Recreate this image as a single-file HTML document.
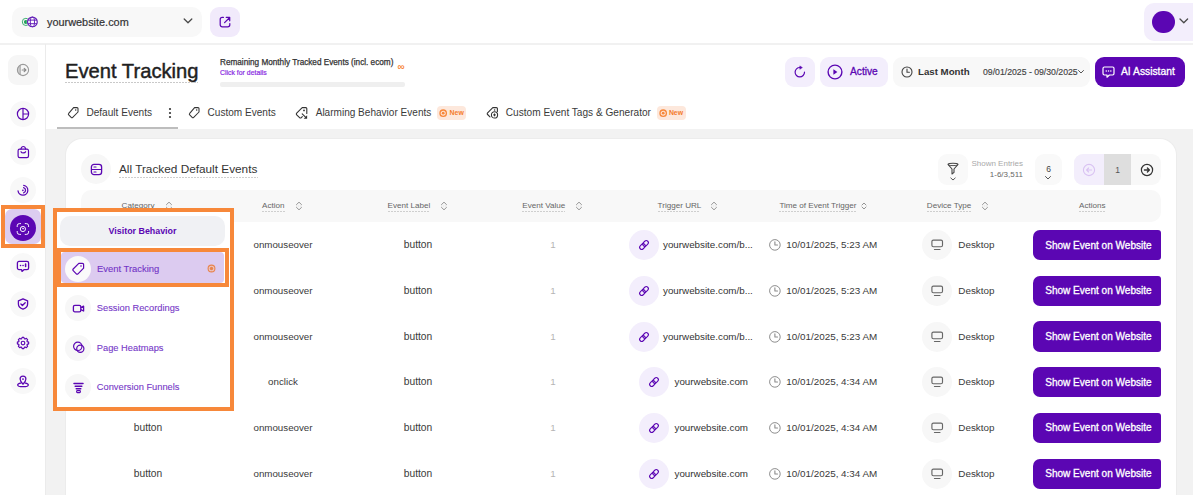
<!DOCTYPE html>
<html><head><meta charset="utf-8"><style>
html,body{margin:0;padding:0;width:1193px;height:495px;overflow:hidden;background:#fff}
body{position:relative;font-family:"Liberation Sans",sans-serif}
.t{position:absolute;white-space:nowrap}
</style></head><body>
<div style="position:absolute;left:12px;top:7px;width:190px;height:30px;background:#f8f8f8;border-radius:10px"></div>
<svg style="position:absolute;left:18px;top:12px" width="24" height="20" viewBox="0 0 24 20" fill="none"><circle cx="7.9" cy="9.9" r="3.6" stroke="#2aa862" stroke-width=".9"/><circle cx="7.9" cy="9.9" r="2" fill="#1ea257"/><circle cx="14.4" cy="9.9" r="5.7" fill="#f8f8f8"/><circle cx="14.4" cy="9.9" r="4.85" fill="#fff" stroke="#6420b8" stroke-width="1.2"/><ellipse cx="14.4" cy="9.9" rx="2.1" ry="4.85" stroke="#6420b8" stroke-width="1"/><path d="M9.8 8.1h9.2M9.8 11.7h9.2" stroke="#6420b8" stroke-width="1"/></svg>
<div class="t" style="left:47px;top:12.00px;height:20px;line-height:20px;font-size:10.9px;text-align:left;color:#333;-webkit-text-stroke:0.2px #333">yourwebsite.com</div>
<svg style="position:absolute;left:183px;top:17px" width="10" height="8" viewBox="0 0 10 8" fill="none"><path d="M1.2 2l3.8 3.8L8.8 2" stroke="#4a4a4a" stroke-width="1.3" stroke-linecap="round" stroke-linejoin="round"/></svg>
<div style="position:absolute;left:210px;top:7px;width:30px;height:30px;background:#f1eafb;border-radius:9px"></div>
<svg style="position:absolute;left:214px;top:12px" width="22" height="20" viewBox="0 0 22 20" fill="none"><path d="M9.4 5.4H8.3a2.1 2.1 0 0 0-2.1 2.1v5.2a2.1 2.1 0 0 0 2.1 2.1h5.4a2.1 2.1 0 0 0 2.1-2.1v-1.1" stroke="#5b06b3" stroke-width="1.25" stroke-linecap="round"/><path d="M10.6 10.6l4.6-4.6M12.2 5.3h3.5v3.5" stroke="#5b06b3" stroke-width="1.25" stroke-linecap="round" stroke-linejoin="round"/></svg>
<div style="position:absolute;left:1144px;top:3px;width:60px;height:38px;background:#f3eefc;border-radius:10px"></div>
<div style="position:absolute;left:1152px;top:10.7px;width:22.6px;height:22.6px;background:#5b06b3;border-radius:50%"></div>
<svg style="position:absolute;left:1178px;top:17px" width="12" height="8" viewBox="0 0 12 8" fill="none"><path d="M2 2l3.8 3.8L9.6 2" stroke="#4a4a4a" stroke-width="1.3" stroke-linecap="round" stroke-linejoin="round"/></svg>
<div style="position:absolute;left:0px;top:43px;width:1193px;height:1.5px;background:#f1f1f1"></div>
<div style="position:absolute;left:45px;top:44px;width:1px;height:451px;background:#ebebeb"></div>
<div style="position:absolute;left:8px;top:54.5px;width:30px;height:30px;background:#f6f6f6;border-radius:9px"></div>
<svg style="position:absolute;left:16px;top:63px" width="14" height="14" viewBox="0 0 14 14" fill="none"><path d="M4.2 1.9A5.6 5.6 0 0 0 4.2 12.1z" fill="#d0d0d0"/><circle cx="7" cy="7" r="5.6" stroke="#9a9a9a" stroke-width="1.1"/><path d="M4.2 2v10" stroke="#9a9a9a" stroke-width=".9"/><path d="M6.2 7h3.6M8.2 5.3L9.9 7 8.2 8.7" stroke="#8a8a8a" stroke-width="1.2" stroke-linecap="round" stroke-linejoin="round"/></svg>
<div style="position:absolute;left:9.7px;top:101px;width:26px;height:26px;background:#f8f8f8;border-radius:50%"></div>
<svg style="position:absolute;left:15.7px;top:107px" width="14" height="14" viewBox="0 0 14 14" fill="none"><circle cx="7" cy="7" r="5.6" stroke="#5b06b3" stroke-width="1.2"/><path d="M7 1.4v11.2M7 7h5.6" stroke="#5b06b3" stroke-width="1.2"/></svg>
<div style="position:absolute;left:9.7px;top:139px;width:26px;height:26px;background:#f8f8f8;border-radius:50%"></div>
<svg style="position:absolute;left:15.7px;top:145px" width="14" height="14" viewBox="0 0 14 14" fill="none"><path d="M3.6 4.2H11a1.5 1.5 0 0 1 1.5 1.5V11a1.6 1.6 0 0 1-1.6 1.6H3.7A1.6 1.6 0 0 1 2.1 11V5.7a1.5 1.5 0 0 1 1.5-1.5z" stroke="#5b06b3" stroke-width="1.2"/><path d="M4.9 4.2C5.3 2.3 6.1 1.5 7.3 1.5s2 .8 2.4 2.7M5 6.7c.7 1.6 4 1.6 4.6 0" stroke="#5b06b3" stroke-width="1.2" stroke-linecap="round"/></svg>
<div style="position:absolute;left:9.7px;top:177px;width:26px;height:26px;background:#f8f8f8;border-radius:50%"></div>
<svg style="position:absolute;left:15.7px;top:183px" width="14" height="14" viewBox="0 0 14 14" fill="none"><path d="M7.7 2.45A4.9 4.9 0 1 1 2.05 7.9" stroke="#5b06b3" stroke-width="1.25" stroke-linecap="round"/><path d="M7.6 4.7A2.7 2.7 0 0 1 7.6 9.9" stroke="#5b06b3" stroke-width="1.25" stroke-linecap="round"/><circle cx="6.9" cy="7.3" r=".85" fill="#5b06b3"/></svg>
<div style="position:absolute;left:9.7px;top:253.3px;width:26px;height:26px;background:#f8f8f8;border-radius:50%"></div>
<svg style="position:absolute;left:15.7px;top:259.3px" width="14" height="14" viewBox="0 0 14 14" fill="none"><path d="M3 2.4h8a1.6 1.6 0 0 1 1.6 1.6v5a1.6 1.6 0 0 1-1.6 1.6H8.2L6 12.4 5.6 10.6H3A1.6 1.6 0 0 1 1.4 9V4A1.6 1.6 0 0 1 3 2.4z" stroke="#5b06b3" stroke-width="1.3" stroke-linejoin="round"/><path d="M4.5 6.4h.1M7 6.4h.1M9.6 5v2.6" stroke="#5b06b3" stroke-width="1.5" stroke-linecap="round"/></svg>
<div style="position:absolute;left:9.7px;top:291.4px;width:26px;height:26px;background:#f8f8f8;border-radius:50%"></div>
<svg style="position:absolute;left:15.7px;top:297.4px" width="14" height="14" viewBox="0 0 14 14" fill="none"><path d="M7 1.8l4.6 2v3.2c0 2.6-2 4.4-4.6 5.2C4.4 11.4 2.4 9.6 2.4 7V3.8z" stroke="#5b06b3" stroke-width="1.3" stroke-linejoin="round"/><path d="M4.9 7l1.5 1.5L9.2 5.7" stroke="#5b06b3" stroke-width="1.3" stroke-linecap="round" stroke-linejoin="round"/></svg>
<div style="position:absolute;left:9.7px;top:329.5px;width:26px;height:26px;background:#f8f8f8;border-radius:50%"></div>
<svg style="position:absolute;left:15.7px;top:335.5px" width="14" height="14" viewBox="0 0 14 14" fill="none"><path d="M5.60 2.83 L6.11 1.37 L7.89 1.37 L8.40 2.83 L8.96 3.06 L10.35 2.39 L11.61 3.65 L10.94 5.04 L11.17 5.60 L12.63 6.11 L12.63 7.89 L11.17 8.40 L10.94 8.96 L11.61 10.35 L10.35 11.61 L8.96 10.94 L8.40 11.17 L7.89 12.63 L6.11 12.63 L5.60 11.17 L5.04 10.94 L3.65 11.61 L2.39 10.35 L3.06 8.96 L2.83 8.40 L1.37 7.89 L1.37 6.11 L2.83 5.60 L3.06 5.04 L2.39 3.65 L3.65 2.39 L5.04 3.06z" stroke="#5b06b3" stroke-width="1.15" stroke-linejoin="round"/><circle cx="7" cy="7" r="1.8" stroke="#5b06b3" stroke-width="1.15"/></svg>
<div style="position:absolute;left:9.7px;top:367.6px;width:26px;height:26px;background:#f8f8f8;border-radius:50%"></div>
<svg style="position:absolute;left:15.7px;top:373.6px" width="14" height="14" viewBox="0 0 14 14" fill="none"><path d="M7 10.2S4.1 7.4 4.1 5.1a2.9 2.9 0 0 1 5.8 0C9.9 7.4 7 10.2 7 10.2z" stroke="#5b06b3" stroke-width="1.25" stroke-linejoin="round"/><circle cx="7" cy="5.1" r=".9" fill="#5b06b3"/><path d="M4.7 9.1C2.9 9.4 1.7 10.1 1.7 10.9c0 1 2.4 1.8 5.3 1.8s5.3-.8 5.3-1.8c0-.8-1.2-1.5-3-1.8" stroke="#5b06b3" stroke-width="1.25" stroke-linecap="round"/></svg>
<div style="position:absolute;left:5.2px;top:209.4px;width:35.5px;height:35px;background:#dccdf0;border-radius:7px"></div>
<div style="position:absolute;left:9.8px;top:215.3px;width:26px;height:26px;background:#5b06b3;border-radius:50%"></div>
<svg style="position:absolute;left:15.8px;top:221.9px" width="14" height="14" viewBox="0 0 14 14" fill="none"><path d="M1.2 4.6V3.8A2.2 2.2 0 0 1 3.4 1.6h1.2M9.2 1.6h1.2a2.2 2.2 0 0 1 2.2 2.2v.8M12.6 9.4v.8a2.2 2.2 0 0 1-2.2 2.2H9.2M4.6 12.4H3.4a2.2 2.2 0 0 1-2.2-2.2v-.8" stroke="#fff" stroke-width=".95" stroke-linecap="round"/><circle cx="6.9" cy="7" r="2.6" stroke="#fff" stroke-width=".95"/><path d="M6.2 5.9l.9 1.3.5-.9" stroke="#fff" stroke-width=".8" stroke-linecap="round"/></svg>
<div style="position:absolute;left:1.3px;top:205.2px;width:43.6px;height:43.3px;border:4px solid #f7883a;box-sizing:border-box"></div>
<div style="position:absolute;left:46px;top:44.5px;width:1147px;height:85.5px;background:#fff"></div>
<div class="t" style="left:65px;top:58.00px;height:26px;line-height:26px;font-size:20.2px;text-align:left;color:#1f1f1f;-webkit-text-stroke:0.45px #1f1f1f">Event Tracking</div>
<div style="position:absolute;left:65px;top:82px;width:133px;height:1px;background:repeating-linear-gradient(90deg,#c9c9c9 0 2px,transparent 2px 3px)"></div>
<div class="t" style="left:220px;top:56.50px;height:12px;line-height:12px;font-size:8.2px;text-align:left;color:#333;-webkit-text-stroke:0.25px #333">Remaining Monthly Tracked Events (incl. ecom)</div>
<div class="t" style="left:220px;top:67.50px;height:10px;line-height:10px;font-size:6.9px;text-align:left;color:#8a2be2;-webkit-text-stroke:0.2px #8a2be2">Click for details</div>
<div class="t" style="left:397.5px;top:60.50px;height:12px;line-height:12px;font-size:10px;text-align:left;color:#f7883a;font-weight:700">&#8734;</div>
<div style="position:absolute;left:220px;top:82px;width:184.5px;height:5px;background:#efefef;border-radius:2px"></div>
<div style="position:absolute;left:785px;top:56.5px;width:30px;height:30px;background:#f3eefc;border-radius:9px"></div>
<svg style="position:absolute;left:790px;top:60px" width="20" height="22" viewBox="0 0 20 22" fill="none"><path d="M14.5 12.2A4.7 4.7 0 1 1 9.9 7.5" stroke="#5b06b3" stroke-width="1.2" stroke-linecap="round"/><path d="M9.8 5.9l2.6 1.7-2.6 1.7z" fill="#5b06b3" stroke="#5b06b3" stroke-width=".5" stroke-linejoin="round"/></svg>
<div style="position:absolute;left:820px;top:56.5px;width:68px;height:30px;background:#f3eefc;border-radius:9px"></div>
<svg style="position:absolute;left:827px;top:63.8px" width="16" height="16" viewBox="0 0 16 16" fill="none"><circle cx="8" cy="8" r="6.9" stroke="#5b06b3" stroke-width="1.4"/><path d="M6.4 5.2l4 2.8-4 2.8z" fill="#5b06b3"/></svg>
<div class="t" style="left:850px;top:63.50px;height:16px;line-height:16px;font-size:10.2px;text-align:left;color:#5b06b3;-webkit-text-stroke:0.3px #5b06b3">Active</div>
<div style="position:absolute;left:893px;top:56.5px;width:197px;height:30px;background:#f8f8f8;border-radius:9px"></div>
<svg style="position:absolute;left:901px;top:65.5px" width="12" height="12" viewBox="0 0 12 12" fill="none"><circle cx="6" cy="6" r="5" stroke="#444" stroke-width="1.1"/><path d="M6 3v3.2h2.4" stroke="#444" stroke-width="1.1" stroke-linecap="round"/></svg>
<div class="t" style="left:918px;top:63.50px;height:16px;line-height:16px;font-size:9.7px;text-align:left;color:#333;font-weight:700">Last Month</div>
<div class="t" style="left:983px;top:63.50px;height:16px;line-height:16px;font-size:8.7px;text-align:left;color:#444;-webkit-text-stroke:0.15px #444">09/01/2025 - 09/30/2025</div>
<svg style="position:absolute;left:1077px;top:69px" width="8" height="6" viewBox="0 0 8 6" fill="none"><path d="M1.5 1.5l2.5 2.5 2.5-2.5" stroke="#555" stroke-width="1" stroke-linecap="round"/></svg>
<div style="position:absolute;left:1095px;top:56.5px;width:89.5px;height:30px;background:#5b06b3;border-radius:9px"></div>
<svg style="position:absolute;left:1102px;top:64.5px" width="13" height="13" viewBox="0 0 13 13" fill="none"><path d="M2.4 2h8.2A1.4 1.4 0 0 1 12 3.4v5.2A1.4 1.4 0 0 1 10.6 10H7.4L5 12.2V10H2.4A1.4 1.4 0 0 1 1 8.6V3.4A1.4 1.4 0 0 1 2.4 2z" stroke="#fff" stroke-width="1.2" stroke-linejoin="round"/><path d="M4.2 6h.1M6.5 6h.1M8.8 6h.1" stroke="#fff" stroke-width="1.4" stroke-linecap="round"/></svg>
<div class="t" style="left:1121px;top:63.50px;height:16px;line-height:16px;font-size:10.3px;text-align:left;color:#fff;-webkit-text-stroke:0.3px #fff">AI Assistant</div>
<svg style="position:absolute;left:67px;top:106.3px" width="13" height="13" viewBox="0 0 13 13" fill="none"><path d="M6.6 1.6h3.4a1 1 0 0 1 1 1v3.4L5.7 11.3a1.1 1.1 0 0 1-1.55 0L1.7 8.85a1.1 1.1 0 0 1 0-1.55z" stroke="#333" stroke-width="1.05" stroke-linejoin="round"/><circle cx="8.7" cy="3.9" r=".75" fill="#333"/></svg>
<div class="t" style="left:86.4px;top:105.20px;height:16px;line-height:16px;font-size:10.1px;text-align:left;color:#3a3a3a">Default Events</div>
<svg style="position:absolute;left:168px;top:107px" width="4" height="12" viewBox="0 0 4 12" fill="none"><circle cx="2" cy="2" r="1.1" fill="#333"/><circle cx="2" cy="6" r="1.1" fill="#333"/><circle cx="2" cy="10" r="1.1" fill="#333"/></svg>
<svg style="position:absolute;left:188px;top:106.3px" width="13" height="13" viewBox="0 0 13 13" fill="none"><path d="M6.6 1.6h3.4a1 1 0 0 1 1 1v3.4L5.7 11.3a1.1 1.1 0 0 1-1.55 0L1.7 8.85a1.1 1.1 0 0 1 0-1.55z" stroke="#333" stroke-width="1.05" stroke-linejoin="round"/><circle cx="8.7" cy="3.9" r=".75" fill="#333"/></svg>
<div class="t" style="left:207.6px;top:105.20px;height:16px;line-height:16px;font-size:10.05px;text-align:left;color:#3a3a3a">Custom Events</div>
<svg style="position:absolute;left:292px;top:104px" width="20" height="18" viewBox="0 0 20 18" fill="none"><path d="M14.8 9.4V4.6a1 1 0 0 0-1-1h-3.6L4.7 9.1a1.2 1.2 0 0 0 0 1.7l2.9 2.9a1.2 1.2 0 0 0 1.7 0l1-1" stroke="#333" stroke-width="1.1" stroke-linecap="round" stroke-linejoin="round"/><circle cx="12" cy="6.4" r=".9" fill="#333"/><path d="M10.2 9.8l3.3 3.3" stroke="#333" stroke-width="1.1" stroke-linecap="round"/><path d="M15.1 11.3v3.4h-3.4z" fill="#333"/></svg>
<div class="t" style="left:315.7px;top:105.20px;height:16px;line-height:16px;font-size:10.05px;text-align:left;color:#3a3a3a">Alarming Behavior Events</div>
<div style="position:absolute;left:437.2px;top:106.4px;width:29px;height:13.4px;background:#fde8dc;border-radius:4px"></div>
<svg style="position:absolute;left:439.2px;top:108.7px" width="9" height="9" viewBox="0 0 9 9" fill="none"><circle cx="4.2" cy="4.2" r="3.2" stroke="#f7883a" stroke-width="1.3"/><circle cx="4.2" cy="4.2" r="1.4" fill="#f7883a"/></svg>
<div class="t" style="left:449.59999999999997px;top:108.30px;height:10px;line-height:10px;font-size:6.9px;text-align:left;color:#f47c2c;font-weight:700">New</div>
<svg style="position:absolute;left:484px;top:104px" width="20" height="18" viewBox="0 0 20 18" fill="none"><path d="M13.4 7.4V4.6a1 1 0 0 0-1-1H8.8L3.6 8.8a1.2 1.2 0 0 0 0 1.7l2.4 2.4" stroke="#333" stroke-width="1.1" stroke-linecap="round" stroke-linejoin="round"/><circle cx="10.6" cy="6" r=".8" fill="#333"/><circle cx="10.5" cy="10.9" r="3.1" stroke="#333" stroke-width="1.1"/><path d="M10.5 9.5v2.8M9.1 10.9h2.8" stroke="#333" stroke-width="1"/></svg>
<div class="t" style="left:505.8px;top:105.20px;height:16px;line-height:16px;font-size:10.1px;text-align:left;color:#3a3a3a">Custom Event Tags &amp; Generator</div>
<div style="position:absolute;left:656.5px;top:106.4px;width:29px;height:13.4px;background:#fde8dc;border-radius:4px"></div>
<svg style="position:absolute;left:658.5px;top:108.7px" width="9" height="9" viewBox="0 0 9 9" fill="none"><circle cx="4.2" cy="4.2" r="3.2" stroke="#f7883a" stroke-width="1.3"/><circle cx="4.2" cy="4.2" r="1.4" fill="#f7883a"/></svg>
<div class="t" style="left:668.9px;top:108.30px;height:10px;line-height:10px;font-size:6.9px;text-align:left;color:#f47c2c;font-weight:700">New</div>
<div style="position:absolute;left:46px;top:128.6px;width:1147px;height:367px;background:#f2f2f2"></div>
<div style="position:absolute;left:57px;top:127px;width:121px;height:2.2px;background:#bdbdbd"></div>
<div style="position:absolute;left:66px;top:138.5px;width:1110px;height:400px;background:#fff;border-radius:16px;box-shadow:0 0 0 1px #ececec"></div>
<div style="position:absolute;left:81px;top:154.3px;width:30px;height:30px;background:#f7f7f7;border-radius:50%"></div>
<svg style="position:absolute;left:90px;top:163px" width="13" height="13" viewBox="0 0 13 13" fill="none"><rect x="1.4" y="1.4" width="10.2" height="10.2" rx="2.6" stroke="#5b06b3" stroke-width="1.3"/><path d="M1.6 6.5h9.8M4 4h2M4 9h2" stroke="#5b06b3" stroke-width="1.2" stroke-linecap="round"/></svg>
<div class="t" style="left:119px;top:160.30px;height:18px;line-height:18px;font-size:11.8px;text-align:left;color:#333">All Tracked Default Events</div>
<div style="position:absolute;left:119px;top:176.8px;width:139px;height:1px;background:repeating-linear-gradient(90deg,#cfcfcf 0 2px,transparent 2px 3px)"></div>
<div style="position:absolute;left:938px;top:154px;width:30px;height:31px;background:#f9f9f9;border-radius:9px"></div>
<svg style="position:absolute;left:946px;top:162px" width="14" height="20" viewBox="0 0 14 20" fill="none"><path d="M2 2.4c0-.8 2.2-1.2 5-1.2s5 .4 5 1.2L8 7v3.4L6 12V7z" stroke="#444" stroke-width="1.1" stroke-linejoin="round"/><path d="M2.4 3c1.2.8 8 .8 9.2 0" stroke="#444" stroke-width=".9"/><path d="M4.8 16l2.2 2 2.2-2" stroke="#555" stroke-width="1" stroke-linecap="round"/></svg>
<div class="t" style="left:940px;top:158.00px;height:12px;line-height:12px;font-size:8.0px;width:83px;text-align:right;color:#a9a9a9">Shown Entries</div>
<div class="t" style="left:940px;top:169.30px;height:12px;line-height:12px;font-size:8.0px;width:83px;text-align:right;color:#666">1-6/3,511</div>
<div style="position:absolute;left:1035px;top:154px;width:27px;height:31px;background:#f9f9f9;border-radius:9px"></div>
<div class="t" style="left:1035px;top:163.30px;height:12px;line-height:12px;font-size:8.5px;width:27px;text-align:center;color:#444">6</div>
<svg style="position:absolute;left:1044px;top:175px" width="8" height="6" viewBox="0 0 8 6" fill="none"><path d="M1.5 1.5l2.5 2.5 2.5-2.5" stroke="#555" stroke-width="1" stroke-linecap="round"/></svg>
<div style="position:absolute;left:1074px;top:154px;width:87px;height:30.6px;background:#f8f8f8;border-radius:9px;overflow:hidden"></div>
<div style="position:absolute;left:1074px;top:154px;width:30px;height:30.6px;background:#f3eefc;border-radius:9px 0 0 9px"></div>
<div style="position:absolute;left:1104px;top:154px;width:27px;height:30.6px;background:#dedede"></div>
<div class="t" style="left:1104px;top:163.50px;height:12px;line-height:12px;font-size:8.5px;width:27px;text-align:center;color:#555">1</div>
<svg style="position:absolute;left:1082px;top:163px" width="14" height="14" viewBox="0 0 14 14" fill="none"><circle cx="7" cy="7" r="5.6" stroke="#d9c2f2" stroke-width="1.1"/><path d="M9.6 7H4.6M6.6 5L4.6 7l2 2" stroke="#d9c2f2" stroke-width="1.1" stroke-linecap="round" stroke-linejoin="round"/></svg>
<svg style="position:absolute;left:1139.5px;top:163px" width="14" height="14" viewBox="0 0 14 14" fill="none"><circle cx="7" cy="7" r="5.6" stroke="#333" stroke-width="1.2"/><path d="M4.4 7h5M7.4 5l2 2-2 2" stroke="#333" stroke-width="1.3" stroke-linecap="round" stroke-linejoin="round"/></svg>
<div style="position:absolute;left:81px;top:190px;width:1080px;height:32px;background:#f8f8f8;border-radius:10px"></div>
<div class="t" style="left:121.6px;top:199.70px;height:12px;line-height:12px;font-size:8.1px;text-align:left;color:#666">Category</div>
<div style="position:absolute;left:121.6px;top:211px;width:33.4px;height:1px;background:repeating-linear-gradient(90deg,#cfcfcf 0 2px,transparent 2px 3px)"></div>
<svg style="position:absolute;left:165px;top:200.7px" width="8" height="10" viewBox="0 0 8 10" fill="none"><path d="M1.5 3.6L4 1.2l2.5 2.4M1.5 6.4L4 8.8l2.5-2.4" stroke="#8a8a8a" stroke-width=".9" stroke-linecap="round" stroke-linejoin="round"/><path d="M1.2 5h5.6" stroke="#d6d6d6" stroke-width=".8" stroke-dasharray="1 1"/></svg>
<div class="t" style="left:262px;top:199.70px;height:12px;line-height:12px;font-size:8.1px;text-align:left;color:#666">Action</div>
<div style="position:absolute;left:262px;top:211px;width:23px;height:1px;background:repeating-linear-gradient(90deg,#cfcfcf 0 2px,transparent 2px 3px)"></div>
<svg style="position:absolute;left:295px;top:200.7px" width="8" height="10" viewBox="0 0 8 10" fill="none"><path d="M1.5 3.6L4 1.2l2.5 2.4M1.5 6.4L4 8.8l2.5-2.4" stroke="#8a8a8a" stroke-width=".9" stroke-linecap="round" stroke-linejoin="round"/><path d="M1.2 5h5.6" stroke="#d6d6d6" stroke-width=".8" stroke-dasharray="1 1"/></svg>
<div class="t" style="left:387.6px;top:199.70px;height:12px;line-height:12px;font-size:8.1px;text-align:left;color:#666">Event Label</div>
<div style="position:absolute;left:387.6px;top:211px;width:42.4px;height:1px;background:repeating-linear-gradient(90deg,#cfcfcf 0 2px,transparent 2px 3px)"></div>
<svg style="position:absolute;left:439.6px;top:200.7px" width="8" height="10" viewBox="0 0 8 10" fill="none"><path d="M1.5 3.6L4 1.2l2.5 2.4M1.5 6.4L4 8.8l2.5-2.4" stroke="#8a8a8a" stroke-width=".9" stroke-linecap="round" stroke-linejoin="round"/><path d="M1.2 5h5.6" stroke="#d6d6d6" stroke-width=".8" stroke-dasharray="1 1"/></svg>
<div class="t" style="left:522.3px;top:199.70px;height:12px;line-height:12px;font-size:8.1px;text-align:left;color:#666">Event Value</div>
<div style="position:absolute;left:522.3px;top:211px;width:43px;height:1px;background:repeating-linear-gradient(90deg,#cfcfcf 0 2px,transparent 2px 3px)"></div>
<svg style="position:absolute;left:574.9px;top:200.7px" width="8" height="10" viewBox="0 0 8 10" fill="none"><path d="M1.5 3.6L4 1.2l2.5 2.4M1.5 6.4L4 8.8l2.5-2.4" stroke="#8a8a8a" stroke-width=".9" stroke-linecap="round" stroke-linejoin="round"/><path d="M1.2 5h5.6" stroke="#d6d6d6" stroke-width=".8" stroke-dasharray="1 1"/></svg>
<div class="t" style="left:657.6px;top:199.70px;height:12px;line-height:12px;font-size:8.1px;text-align:left;color:#666">Trigger URL</div>
<div style="position:absolute;left:657.6px;top:211px;width:42.4px;height:1px;background:repeating-linear-gradient(90deg,#cfcfcf 0 2px,transparent 2px 3px)"></div>
<svg style="position:absolute;left:710px;top:200.7px" width="8" height="10" viewBox="0 0 8 10" fill="none"><path d="M1.5 3.6L4 1.2l2.5 2.4M1.5 6.4L4 8.8l2.5-2.4" stroke="#8a8a8a" stroke-width=".9" stroke-linecap="round" stroke-linejoin="round"/><path d="M1.2 5h5.6" stroke="#d6d6d6" stroke-width=".8" stroke-dasharray="1 1"/></svg>
<div class="t" style="left:779.4px;top:199.70px;height:12px;line-height:12px;font-size:8.1px;text-align:left;color:#666">Time of Event Trigger</div>
<div style="position:absolute;left:779.4px;top:211px;width:77.8px;height:1px;background:repeating-linear-gradient(90deg,#cfcfcf 0 2px,transparent 2px 3px)"></div>
<svg style="position:absolute;left:860.5px;top:201.5px" width="6" height="8" viewBox="0 0 6 8" fill="none"><path d="M1 3L3 1l2 2M1 5l2 2 2-2" stroke="#888" stroke-width=".9" stroke-linecap="round" stroke-linejoin="round"/></svg>
<div class="t" style="left:926.8px;top:199.70px;height:12px;line-height:12px;font-size:8.1px;text-align:left;color:#666">Device Type</div>
<div style="position:absolute;left:926.8px;top:211px;width:44.6px;height:1px;background:repeating-linear-gradient(90deg,#cfcfcf 0 2px,transparent 2px 3px)"></div>
<svg style="position:absolute;left:980.5px;top:200.7px" width="8" height="10" viewBox="0 0 8 10" fill="none"><path d="M1.5 3.6L4 1.2l2.5 2.4M1.5 6.4L4 8.8l2.5-2.4" stroke="#8a8a8a" stroke-width=".9" stroke-linecap="round" stroke-linejoin="round"/><path d="M1.2 5h5.6" stroke="#d6d6d6" stroke-width=".8" stroke-dasharray="1 1"/></svg>
<div class="t" style="left:1079px;top:199.70px;height:12px;line-height:12px;font-size:8.1px;text-align:left;color:#666">Actions</div>
<div style="position:absolute;left:1079px;top:211px;width:27px;height:1px;background:repeating-linear-gradient(90deg,#cfcfcf 0 2px,transparent 2px 3px)"></div>
<div class="t" style="left:100px;top:237.10px;height:16px;line-height:16px;font-size:10.25px;width:96px;text-align:center;color:#3a3a3a">button</div>
<div class="t" style="left:233px;top:237.10px;height:16px;line-height:16px;font-size:9.75px;width:100px;text-align:center;color:#3a3a3a">onmouseover</div>
<div class="t" style="left:368px;top:237.10px;height:16px;line-height:16px;font-size:10.25px;width:100px;text-align:center;color:#3a3a3a">button</div>
<div class="t" style="left:503px;top:237.10px;height:16px;line-height:16px;font-size:9.8px;width:100px;text-align:center;color:#b5b5b5">1</div>
<div style="position:absolute;left:629px;top:230.1px;width:30px;height:30px;background:#f3eefc;border-radius:50%"></div>
<svg style="position:absolute;left:636.2px;top:237.1px" width="16" height="16" viewBox="0 0 16 16" fill="none"><g transform="rotate(-45 8 8)"><rect x="2.7" y="5.9" width="6.2" height="4.2" rx="2.1" stroke="#5b06b3" stroke-width="1.1"/><rect x="7.1" y="5.9" width="6.2" height="4.2" rx="2.1" stroke="#5b06b3" stroke-width="1.1"/></g></svg>
<div class="t" style="left:663px;top:237.10px;height:16px;line-height:16px;font-size:9.8px;text-align:left;color:#333">yourwebsite.com/b...</div>
<svg style="position:absolute;left:769px;top:239.1px" width="12" height="12" viewBox="0 0 12 12" fill="none"><circle cx="5.9" cy="5.9" r="5.3" stroke="#8c8c8c" stroke-width="1"/><path d="M5.9 2.9v3.1h2.6" stroke="#8c8c8c" stroke-width="1.1" stroke-linecap="round" stroke-linejoin="round"/></svg>
<div class="t" style="left:786.3px;top:237.10px;height:16px;line-height:16px;font-size:9.87px;text-align:left;color:#3a3a3a">10/01/2025, 5:23 AM</div>
<div style="position:absolute;left:922.3px;top:230.1px;width:30px;height:30px;background:#f7f7f7;border-radius:50%"></div>
<svg style="position:absolute;left:930.3px;top:238.1px" width="14" height="14" viewBox="0 0 14 14" fill="none"><rect x="1.9" y="2.1" width="10.6" height="6.6" rx="1.5" stroke="#666" stroke-width="1.15"/><path d="M4.4 11.5h5.6" stroke="#666" stroke-width="1.1" stroke-linecap="round"/></svg>
<div class="t" style="left:958.3px;top:237.10px;height:16px;line-height:16px;font-size:9.87px;text-align:left;color:#3a3a3a">Desktop</div>
<div style="position:absolute;left:1033.4px;top:229.9px;width:128px;height:30.4px;background:#5b06b3;border-radius:7px 3px 3px 7px"></div>
<div class="t" style="left:1045.2px;top:237.60px;height:16px;line-height:16px;font-size:10.05px;text-align:left;color:#fff;-webkit-text-stroke:0.3px #fff">Show Event on Website</div>
<div class="t" style="left:100px;top:282.82px;height:16px;line-height:16px;font-size:10.25px;width:96px;text-align:center;color:#3a3a3a">button</div>
<div class="t" style="left:233px;top:282.82px;height:16px;line-height:16px;font-size:9.75px;width:100px;text-align:center;color:#3a3a3a">onmouseover</div>
<div class="t" style="left:368px;top:282.82px;height:16px;line-height:16px;font-size:10.25px;width:100px;text-align:center;color:#3a3a3a">button</div>
<div class="t" style="left:503px;top:282.82px;height:16px;line-height:16px;font-size:9.8px;width:100px;text-align:center;color:#b5b5b5">1</div>
<div style="position:absolute;left:629px;top:275.82px;width:30px;height:30px;background:#f3eefc;border-radius:50%"></div>
<svg style="position:absolute;left:636.2px;top:282.82px" width="16" height="16" viewBox="0 0 16 16" fill="none"><g transform="rotate(-45 8 8)"><rect x="2.7" y="5.9" width="6.2" height="4.2" rx="2.1" stroke="#5b06b3" stroke-width="1.1"/><rect x="7.1" y="5.9" width="6.2" height="4.2" rx="2.1" stroke="#5b06b3" stroke-width="1.1"/></g></svg>
<div class="t" style="left:663px;top:282.82px;height:16px;line-height:16px;font-size:9.8px;text-align:left;color:#333">yourwebsite.com/b...</div>
<svg style="position:absolute;left:769px;top:284.82px" width="12" height="12" viewBox="0 0 12 12" fill="none"><circle cx="5.9" cy="5.9" r="5.3" stroke="#8c8c8c" stroke-width="1"/><path d="M5.9 2.9v3.1h2.6" stroke="#8c8c8c" stroke-width="1.1" stroke-linecap="round" stroke-linejoin="round"/></svg>
<div class="t" style="left:786.3px;top:282.82px;height:16px;line-height:16px;font-size:9.87px;text-align:left;color:#3a3a3a">10/01/2025, 5:23 AM</div>
<div style="position:absolute;left:922.3px;top:275.82px;width:30px;height:30px;background:#f7f7f7;border-radius:50%"></div>
<svg style="position:absolute;left:930.3px;top:283.82px" width="14" height="14" viewBox="0 0 14 14" fill="none"><rect x="1.9" y="2.1" width="10.6" height="6.6" rx="1.5" stroke="#666" stroke-width="1.15"/><path d="M4.4 11.5h5.6" stroke="#666" stroke-width="1.1" stroke-linecap="round"/></svg>
<div class="t" style="left:958.3px;top:282.82px;height:16px;line-height:16px;font-size:9.87px;text-align:left;color:#3a3a3a">Desktop</div>
<div style="position:absolute;left:1033.4px;top:275.62px;width:128px;height:30.4px;background:#5b06b3;border-radius:7px 3px 3px 7px"></div>
<div class="t" style="left:1045.2px;top:283.32px;height:16px;line-height:16px;font-size:10.05px;text-align:left;color:#fff;-webkit-text-stroke:0.3px #fff">Show Event on Website</div>
<div class="t" style="left:100px;top:328.54px;height:16px;line-height:16px;font-size:10.25px;width:96px;text-align:center;color:#3a3a3a">button</div>
<div class="t" style="left:233px;top:328.54px;height:16px;line-height:16px;font-size:9.75px;width:100px;text-align:center;color:#3a3a3a">onmouseover</div>
<div class="t" style="left:368px;top:328.54px;height:16px;line-height:16px;font-size:10.25px;width:100px;text-align:center;color:#3a3a3a">button</div>
<div class="t" style="left:503px;top:328.54px;height:16px;line-height:16px;font-size:9.8px;width:100px;text-align:center;color:#b5b5b5">1</div>
<div style="position:absolute;left:629px;top:321.53999999999996px;width:30px;height:30px;background:#f3eefc;border-radius:50%"></div>
<svg style="position:absolute;left:636.2px;top:328.53999999999996px" width="16" height="16" viewBox="0 0 16 16" fill="none"><g transform="rotate(-45 8 8)"><rect x="2.7" y="5.9" width="6.2" height="4.2" rx="2.1" stroke="#5b06b3" stroke-width="1.1"/><rect x="7.1" y="5.9" width="6.2" height="4.2" rx="2.1" stroke="#5b06b3" stroke-width="1.1"/></g></svg>
<div class="t" style="left:663px;top:328.54px;height:16px;line-height:16px;font-size:9.8px;text-align:left;color:#333">yourwebsite.com/b...</div>
<svg style="position:absolute;left:769px;top:330.53999999999996px" width="12" height="12" viewBox="0 0 12 12" fill="none"><circle cx="5.9" cy="5.9" r="5.3" stroke="#8c8c8c" stroke-width="1"/><path d="M5.9 2.9v3.1h2.6" stroke="#8c8c8c" stroke-width="1.1" stroke-linecap="round" stroke-linejoin="round"/></svg>
<div class="t" style="left:786.3px;top:328.54px;height:16px;line-height:16px;font-size:9.87px;text-align:left;color:#3a3a3a">10/01/2025, 5:23 AM</div>
<div style="position:absolute;left:922.3px;top:321.53999999999996px;width:30px;height:30px;background:#f7f7f7;border-radius:50%"></div>
<svg style="position:absolute;left:930.3px;top:329.53999999999996px" width="14" height="14" viewBox="0 0 14 14" fill="none"><rect x="1.9" y="2.1" width="10.6" height="6.6" rx="1.5" stroke="#666" stroke-width="1.15"/><path d="M4.4 11.5h5.6" stroke="#666" stroke-width="1.1" stroke-linecap="round"/></svg>
<div class="t" style="left:958.3px;top:328.54px;height:16px;line-height:16px;font-size:9.87px;text-align:left;color:#3a3a3a">Desktop</div>
<div style="position:absolute;left:1033.4px;top:321.34px;width:128px;height:30.4px;background:#5b06b3;border-radius:7px 3px 3px 7px"></div>
<div class="t" style="left:1045.2px;top:329.04px;height:16px;line-height:16px;font-size:10.05px;text-align:left;color:#fff;-webkit-text-stroke:0.3px #fff">Show Event on Website</div>
<div class="t" style="left:100px;top:374.26px;height:16px;line-height:16px;font-size:10.25px;width:96px;text-align:center;color:#3a3a3a">button</div>
<div class="t" style="left:233px;top:374.26px;height:16px;line-height:16px;font-size:9.75px;width:100px;text-align:center;color:#3a3a3a">onclick</div>
<div class="t" style="left:368px;top:374.26px;height:16px;line-height:16px;font-size:10.25px;width:100px;text-align:center;color:#3a3a3a">button</div>
<div class="t" style="left:503px;top:374.26px;height:16px;line-height:16px;font-size:9.8px;width:100px;text-align:center;color:#b5b5b5">1</div>
<div style="position:absolute;left:639px;top:367.26px;width:30px;height:30px;background:#f3eefc;border-radius:50%"></div>
<svg style="position:absolute;left:646.2px;top:374.26px" width="16" height="16" viewBox="0 0 16 16" fill="none"><g transform="rotate(-45 8 8)"><rect x="2.7" y="5.9" width="6.2" height="4.2" rx="2.1" stroke="#5b06b3" stroke-width="1.1"/><rect x="7.1" y="5.9" width="6.2" height="4.2" rx="2.1" stroke="#5b06b3" stroke-width="1.1"/></g></svg>
<div class="t" style="left:674.5px;top:374.26px;height:16px;line-height:16px;font-size:9.8px;text-align:left;color:#333">yourwebsite.com</div>
<svg style="position:absolute;left:769px;top:376.26px" width="12" height="12" viewBox="0 0 12 12" fill="none"><circle cx="5.9" cy="5.9" r="5.3" stroke="#8c8c8c" stroke-width="1"/><path d="M5.9 2.9v3.1h2.6" stroke="#8c8c8c" stroke-width="1.1" stroke-linecap="round" stroke-linejoin="round"/></svg>
<div class="t" style="left:786.3px;top:374.26px;height:16px;line-height:16px;font-size:9.87px;text-align:left;color:#3a3a3a">10/01/2025, 4:34 AM</div>
<div style="position:absolute;left:922.3px;top:367.26px;width:30px;height:30px;background:#f7f7f7;border-radius:50%"></div>
<svg style="position:absolute;left:930.3px;top:375.26px" width="14" height="14" viewBox="0 0 14 14" fill="none"><rect x="1.9" y="2.1" width="10.6" height="6.6" rx="1.5" stroke="#666" stroke-width="1.15"/><path d="M4.4 11.5h5.6" stroke="#666" stroke-width="1.1" stroke-linecap="round"/></svg>
<div class="t" style="left:958.3px;top:374.26px;height:16px;line-height:16px;font-size:9.87px;text-align:left;color:#3a3a3a">Desktop</div>
<div style="position:absolute;left:1033.4px;top:367.06px;width:128px;height:30.4px;background:#5b06b3;border-radius:7px 3px 3px 7px"></div>
<div class="t" style="left:1045.2px;top:374.76px;height:16px;line-height:16px;font-size:10.05px;text-align:left;color:#fff;-webkit-text-stroke:0.3px #fff">Show Event on Website</div>
<div class="t" style="left:100px;top:419.98px;height:16px;line-height:16px;font-size:10.25px;width:96px;text-align:center;color:#3a3a3a">button</div>
<div class="t" style="left:233px;top:419.98px;height:16px;line-height:16px;font-size:9.75px;width:100px;text-align:center;color:#3a3a3a">onmouseover</div>
<div class="t" style="left:368px;top:419.98px;height:16px;line-height:16px;font-size:10.25px;width:100px;text-align:center;color:#3a3a3a">button</div>
<div class="t" style="left:503px;top:419.98px;height:16px;line-height:16px;font-size:9.8px;width:100px;text-align:center;color:#b5b5b5">1</div>
<div style="position:absolute;left:639px;top:412.98px;width:30px;height:30px;background:#f3eefc;border-radius:50%"></div>
<svg style="position:absolute;left:646.2px;top:419.98px" width="16" height="16" viewBox="0 0 16 16" fill="none"><g transform="rotate(-45 8 8)"><rect x="2.7" y="5.9" width="6.2" height="4.2" rx="2.1" stroke="#5b06b3" stroke-width="1.1"/><rect x="7.1" y="5.9" width="6.2" height="4.2" rx="2.1" stroke="#5b06b3" stroke-width="1.1"/></g></svg>
<div class="t" style="left:674.5px;top:419.98px;height:16px;line-height:16px;font-size:9.8px;text-align:left;color:#333">yourwebsite.com</div>
<svg style="position:absolute;left:769px;top:421.98px" width="12" height="12" viewBox="0 0 12 12" fill="none"><circle cx="5.9" cy="5.9" r="5.3" stroke="#8c8c8c" stroke-width="1"/><path d="M5.9 2.9v3.1h2.6" stroke="#8c8c8c" stroke-width="1.1" stroke-linecap="round" stroke-linejoin="round"/></svg>
<div class="t" style="left:786.3px;top:419.98px;height:16px;line-height:16px;font-size:9.87px;text-align:left;color:#3a3a3a">10/01/2025, 4:34 AM</div>
<div style="position:absolute;left:922.3px;top:412.98px;width:30px;height:30px;background:#f7f7f7;border-radius:50%"></div>
<svg style="position:absolute;left:930.3px;top:420.98px" width="14" height="14" viewBox="0 0 14 14" fill="none"><rect x="1.9" y="2.1" width="10.6" height="6.6" rx="1.5" stroke="#666" stroke-width="1.15"/><path d="M4.4 11.5h5.6" stroke="#666" stroke-width="1.1" stroke-linecap="round"/></svg>
<div class="t" style="left:958.3px;top:419.98px;height:16px;line-height:16px;font-size:9.87px;text-align:left;color:#3a3a3a">Desktop</div>
<div style="position:absolute;left:1033.4px;top:412.78000000000003px;width:128px;height:30.4px;background:#5b06b3;border-radius:7px 3px 3px 7px"></div>
<div class="t" style="left:1045.2px;top:420.48px;height:16px;line-height:16px;font-size:10.05px;text-align:left;color:#fff;-webkit-text-stroke:0.3px #fff">Show Event on Website</div>
<div class="t" style="left:100px;top:465.70px;height:16px;line-height:16px;font-size:10.25px;width:96px;text-align:center;color:#3a3a3a">button</div>
<div class="t" style="left:233px;top:465.70px;height:16px;line-height:16px;font-size:9.75px;width:100px;text-align:center;color:#3a3a3a">onmouseover</div>
<div class="t" style="left:368px;top:465.70px;height:16px;line-height:16px;font-size:10.25px;width:100px;text-align:center;color:#3a3a3a">button</div>
<div class="t" style="left:503px;top:465.70px;height:16px;line-height:16px;font-size:9.8px;width:100px;text-align:center;color:#b5b5b5">1</div>
<div style="position:absolute;left:639px;top:458.7px;width:30px;height:30px;background:#f3eefc;border-radius:50%"></div>
<svg style="position:absolute;left:646.2px;top:465.7px" width="16" height="16" viewBox="0 0 16 16" fill="none"><g transform="rotate(-45 8 8)"><rect x="2.7" y="5.9" width="6.2" height="4.2" rx="2.1" stroke="#5b06b3" stroke-width="1.1"/><rect x="7.1" y="5.9" width="6.2" height="4.2" rx="2.1" stroke="#5b06b3" stroke-width="1.1"/></g></svg>
<div class="t" style="left:674.5px;top:465.70px;height:16px;line-height:16px;font-size:9.8px;text-align:left;color:#333">yourwebsite.com</div>
<svg style="position:absolute;left:769px;top:467.7px" width="12" height="12" viewBox="0 0 12 12" fill="none"><circle cx="5.9" cy="5.9" r="5.3" stroke="#8c8c8c" stroke-width="1"/><path d="M5.9 2.9v3.1h2.6" stroke="#8c8c8c" stroke-width="1.1" stroke-linecap="round" stroke-linejoin="round"/></svg>
<div class="t" style="left:786.3px;top:465.70px;height:16px;line-height:16px;font-size:9.87px;text-align:left;color:#3a3a3a">10/01/2025, 4:34 AM</div>
<div style="position:absolute;left:922.3px;top:458.7px;width:30px;height:30px;background:#f7f7f7;border-radius:50%"></div>
<svg style="position:absolute;left:930.3px;top:466.7px" width="14" height="14" viewBox="0 0 14 14" fill="none"><rect x="1.9" y="2.1" width="10.6" height="6.6" rx="1.5" stroke="#666" stroke-width="1.15"/><path d="M4.4 11.5h5.6" stroke="#666" stroke-width="1.1" stroke-linecap="round"/></svg>
<div class="t" style="left:958.3px;top:465.70px;height:16px;line-height:16px;font-size:9.87px;text-align:left;color:#3a3a3a">Desktop</div>
<div style="position:absolute;left:1033.4px;top:458.5px;width:128px;height:30.4px;background:#5b06b3;border-radius:7px 3px 3px 7px"></div>
<div class="t" style="left:1045.2px;top:466.20px;height:16px;line-height:16px;font-size:10.05px;text-align:left;color:#fff;-webkit-text-stroke:0.3px #fff">Show Event on Website</div>
<div style="position:absolute;left:56.5px;top:212px;width:173px;height:194.6px;background:#fff"></div>
<div style="position:absolute;left:60px;top:216px;width:165px;height:30px;background:#f0f1f4;border-radius:10px"></div>
<div class="t" style="left:60px;top:224.00px;height:14px;line-height:14px;font-size:8.9px;width:165px;text-align:center;color:#5b06b3;font-weight:700">Visitor Behavior</div>
<div style="position:absolute;left:61px;top:252px;width:163.2px;height:31px;background:#dccbf0;border-radius:4px"></div>
<div style="position:absolute;left:65.2px;top:255.5px;width:26px;height:26px;background:#fafafa;border-radius:50%"></div>
<svg style="position:absolute;left:71.5px;top:262px" width="13" height="13" viewBox="0 0 13 13" fill="none"><path d="M6.8 1.4h3.6a1.2 1.2 0 0 1 1.2 1.2v3.6L6 11.8a1.2 1.2 0 0 1-1.7 0L1.2 8.7a1.2 1.2 0 0 1 0-1.7z" stroke="#5b06b3" stroke-width="1.2" stroke-linejoin="round"/><circle cx="9" cy="4" r=".8" fill="#5b06b3"/></svg>
<div class="t" style="left:97px;top:261.50px;height:14px;line-height:14px;font-size:9.42px;text-align:left;color:#7232c6;-webkit-text-stroke:0.1px #7232c6">Event Tracking</div>
<svg style="position:absolute;left:206.8px;top:264px" width="9" height="9" viewBox="0 0 9 9" fill="none"><circle cx="4.5" cy="4.5" r="3.4" stroke="#e8844e" stroke-width="1.1" fill="#ecc3c0"/><circle cx="4.5" cy="4.5" r="1.7" fill="#e8844e"/></svg>
<div style="position:absolute;left:57px;top:248px;width:172px;height:38.5px;border:4px solid #f7883a;box-sizing:border-box"></div>
<div style="position:absolute;left:65.2px;top:295px;width:26px;height:26px;background:#f7f7f7;border-radius:50%"></div>
<svg style="position:absolute;left:71.7px;top:301.5px" width="13" height="13" viewBox="0 0 13 13" fill="none"><rect x="1.4" y="3.4" width="7.4" height="6.4" rx="1.4" stroke="#5b06b3" stroke-width="1.3"/><path d="M8.8 5.6l2.8-1.4v4.8L8.8 7.6" stroke="#5b06b3" stroke-width="1.3" stroke-linejoin="round"/></svg>
<div class="t" style="left:96.8px;top:301.00px;height:14px;line-height:14px;font-size:9.3px;text-align:left;color:#7638c8;-webkit-text-stroke:0.1px #7638c8">Session Recordings</div>
<div style="position:absolute;left:65.2px;top:334.5px;width:26px;height:26px;background:#f7f7f7;border-radius:50%"></div>
<svg style="position:absolute;left:71.7px;top:341.0px" width="13" height="13" viewBox="0 0 13 13" fill="none"><circle cx="5.8" cy="5.3" r="4.2" stroke="#5b06b3" stroke-width="1.2"/><circle cx="8.3" cy="7.8" r="3.6" stroke="#5b06b3" stroke-width="1.2"/></svg>
<div class="t" style="left:96.8px;top:340.50px;height:14px;line-height:14px;font-size:9.3px;text-align:left;color:#7638c8;-webkit-text-stroke:0.1px #7638c8">Page Heatmaps</div>
<div style="position:absolute;left:65.2px;top:374px;width:26px;height:26px;background:#f7f7f7;border-radius:50%"></div>
<svg style="position:absolute;left:71.7px;top:380.5px" width="13" height="13" viewBox="0 0 13 13" fill="none"><path d="M2 2.6h9M3.2 5.2h6.6M4.2 7.8h4.6" stroke="#5b06b3" stroke-width="1.5" stroke-linecap="round"/><rect x="4.6" y="9.6" width="3.8" height="2" rx=".8" stroke="#5b06b3" stroke-width="1.1"/></svg>
<div class="t" style="left:96.8px;top:380.00px;height:14px;line-height:14px;font-size:9.3px;text-align:left;color:#7638c8;-webkit-text-stroke:0.1px #7638c8">Conversion Funnels</div>
<div style="position:absolute;left:52.5px;top:208px;width:181px;height:202.6px;border:4px solid #f7883a;box-sizing:border-box"></div>
</body></html>
